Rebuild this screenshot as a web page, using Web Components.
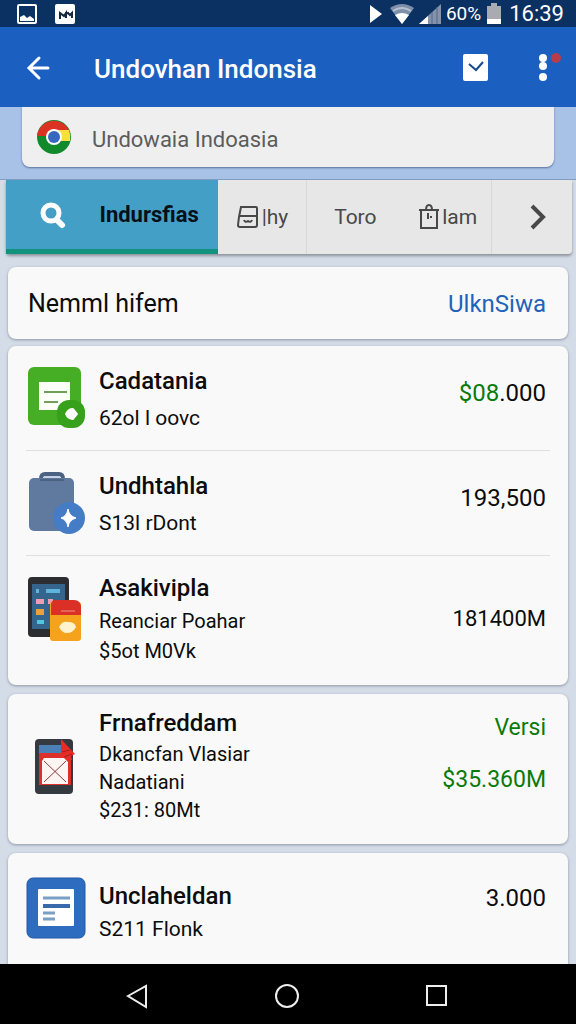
<!DOCTYPE html>
<html lang="id">
<head>
<meta charset="utf-8">
<meta name="viewport" content="width=device-width, initial-scale=1">
<title>Undovhan Indonsia</title>
<style>
    :root
    {
        --blue: #1b60c0;
        --navy: #0b3163;
        --green: #0a7a0a;
        --ink: #0c0c0c;
        --card: #f9f9f9;
    }

    body
    {
        margin: 0;
        font-family: Roboto, "Liberation Sans", sans-serif;
        color: var(--ink);
        background-color: #d3dce7;
    }
</style>
</head>
<body>

<phone-screen>
    <status-bar slot="top" battery="60%" time="16:39"></status-bar>
    <app-bar slot="top" title-text="Undovhan Indonsia"></app-bar>
    <search-bar slot="top" value="Undowaia Indoasia"></search-bar>
    <tab-strip slot="top"></tab-strip>

    <list-card>
        <section-head>
            Nemml hifem
            <a slot="action" href="#all">UlknSiwa</a>
        </section-head>
    </list-card>

    <list-card class="near">
        <list-item icon="note">
            Cadatania
            <span slot="info">62ol l oovc</span>
            <span slot="value"><span style="color: var(--green)">$08</span>.000</span>
        </list-item>
        <list-item icon="bag">
            Undhtahla
            <span slot="info">S13l rDont</span>
            <span slot="value">193,500</span>
        </list-item>
        <list-item icon="tablet" size="tall">
            Asakivipla
            <span slot="info">Reanciar Poahar</span>
            <span slot="info">$5ot M0Vk</span>
            <span slot="value">181400M</span>
        </list-item>
    </list-card>

    <list-card>
        <list-item icon="phone" size="full">
            Frnafreddam
            <span slot="info">Dkancfan Vlasiar</span>
            <span slot="info">Nadatiani</span>
            <span slot="info">$231: 80Mt</span>
            <span slot="value" style="color: var(--green)">Versi</span>
            <span slot="value" style="color: var(--green)">$35.360M</span>
        </list-item>
    </list-card>

    <list-card>
        <list-item icon="doc" size="last">
            Unclaheldan
            <span slot="info">S211 Flonk</span>
            <span slot="value">3.000</span>
        </list-item>
    </list-card>

    <nav-keys slot="bottom"></nav-keys>
</phone-screen>

<script>
// Attach an open shadow root filled with the given markup
function render(element, html) {
    element.attachShadow({ mode: 'open' }).innerHTML = html;
}


// ICONS OF THE LIST
const icons = {
    note: `
        <svg width="60" height="64" viewBox="0 0 60 64" aria-hidden="true">
            <rect x="2" y="1" width="53" height="58" rx="6" fill="#46ae25"/>
            <path d="M13 16h31v28H13z" fill="#fbfff8"/>
            <path d="M18 26h23M18 36h14" stroke="#6f9f58" stroke-width="2"/>
            <rect x="31" y="34" width="28" height="28" rx="12" fill="#38a11c"/>
            <path d="M40 48q2-5 7-5l4 5-4 5q-5 0-7-5z" fill="#fff" stroke="#fff" stroke-width="2" stroke-linejoin="round"/>
        </svg>`,
    bag: `
        <svg width="60" height="64" viewBox="0 0 60 64" aria-hidden="true">
            <path d="M15 8q0-5 4-5h14q4 0 4 5" fill="none" stroke="#4c6283" stroke-width="4"/>
            <path d="M18 6h16" stroke="#c5d0e0" stroke-width="2"/>
            <rect x="3" y="7" width="45" height="53" rx="5" fill="#60799f"/>
            <path d="M14 9h24" stroke="#4c6283" stroke-width="2"/>
            <circle cx="43" cy="47" r="16" fill="#447cc5"/>
            <path d="M42 38q1 7 8 9-7 2-8 9-1-7-7-9 6-2 7-9z" fill="#fff" stroke="#fff" stroke-width="1"/>
        </svg>`,
    tablet: `
        <svg width="60" height="66" viewBox="0 0 60 66" aria-hidden="true">
            <rect x="2" y="1" width="41" height="60" rx="4" fill="#2b2d30"/>
            <path d="M6 8h33v45H6z" fill="#35658c"/>
            <path d="M10 15h3M20 15h14" stroke="#5fb4dc" stroke-width="4"/>
            <path d="M10 23h8v5h-8zM22 23h5v5h-5z" fill="#ef9db5"/>
            <path d="M10 33h8v6h-8z" fill="#eda03a"/>
            <path d="M11 44h7v4h-7z" fill="#55c5dd"/>
            <rect x="24" y="26" width="31" height="39" rx="3" fill="#f5a31d"/>
            <path d="M25 39V29q0-5 5-5h18q7 0 7 8v7z" fill="#da3026"/>
            <path d="M35 35h14" stroke="#f3948b" stroke-width="1"/>
            <path d="M33 51q3-6 9-5 7 0 8 5-3 6-9 6-5 0-8-6z" fill="#fff3cf"/>
        </svg>`,
    phone: `
        <svg width="60" height="58" viewBox="0 0 60 58" aria-hidden="true">
            <rect x="9" y="1" width="38" height="55" rx="4" fill="#343a40"/>
            <path d="M13 7h22v9H13z" fill="#4b7fb5"/>
            <path d="M13 15h32v32H13z" fill="#dc302b"/>
            <path d="M35 1l14 15-4 2 1 4H35z" fill="#e62c24"/>
            <path d="M36 14l8-2M38 19l8-3" stroke="#a91e1b" stroke-width="1"/>
            <path d="M18 20h20l4 4v22H16V23z" fill="#fff5f3"/>
            <path d="M18 23l22 21M40 23L18 44" stroke="#8e3940" stroke-width="1"/>
        </svg>`,
    doc: `
        <svg width="60" height="62" viewBox="0 0 60 62" aria-hidden="true">
            <rect x="1" y="1" width="58" height="60" rx="6" fill="#2e6cbf" stroke="#2159a6"/>
            <rect x="12" y="12" width="36" height="37" rx="1" fill="#fff"/>
            <path d="M17 21h27M17 36h12M17 42h12" stroke="#7ba0c6" stroke-width="3"/>
            <path d="M17 29h27" stroke="#3869aa" stroke-width="4"/>
        </svg>`
};


// PAGE FRAME
class PhoneScreen extends HTMLElement {
    constructor() {
        super();
        render(this, `
        <style>
        :host
        {
            display: flex;
            flex-direction: column;
            height: 100vh;
        }

        main
        {
            flex: 1;
            min-height: 0;
            overflow-y: auto;
            scrollbar-width: none;
            display: flex;
            flex-direction: column;
            gap: 9px;
            padding: 13px 8px 0;
        }
        </style>
        <slot name="top"></slot>
        <main><slot></slot></main>
        <slot name="bottom"></slot>`);
    }
}


// STATUS BAR
class StatusBar extends HTMLElement {
    constructor() {
        super();
        render(this, `
        <style>
        :host
        {
            display: flex;
            justify-content: space-between;
            align-items: center;
            flex-shrink: 0;
            height: 27px;
            padding: 0 12px 0 16px;
            color: #fff;
            background-color: var(--navy);
        }

        div
        {
            display: flex;
            align-items: center;
        }

        .left { gap: 16px; }
        .right { gap: 5px; }
        .percent { font-size: 19px; }
        .time { font-size: 22px; margin-left: 2px; }
        svg { display: block; }
        </style>
        <div class="left">
            <svg width="22" height="22" viewBox="0 0 22 22" aria-hidden="true">
                <rect x="2" y="2" width="18" height="18" rx="1" fill="none" stroke="#fff" stroke-width="2"/>
                <path d="M4 18v-4l4-2 3 3 3-2 4 3v2z" fill="#fff"/>
            </svg>
            <svg width="22" height="22" viewBox="0 0 22 22" aria-hidden="true">
                <rect x="1" y="1" width="20" height="20" rx="2" fill="#fff"/>
                <path d="M6 16v-6l4 3 2-3v5M11 11l3-1 2 2 2-2v5" fill="none" stroke="#17273e" stroke-width="2"/>
            </svg>
        </div>
        <div class="right">
            <svg width="18" height="20" viewBox="0 0 18 20" aria-hidden="true"><path d="M3 1l12 9-12 9z" fill="#fff"/></svg>
            <svg width="24" height="22" viewBox="0 0 24 22" aria-hidden="true">
                <path d="M0 5q12-8 24 0L12 21z" fill="#7d8fa9"/>
                <path d="M3 8q9-6 18 0" fill="none" stroke="#b7c2d1" stroke-width="2"/>
                <path d="M5 12q7-4 14 0l-7 9z" fill="#fff"/>
            </svg>
            <svg width="22" height="22" viewBox="0 0 22 22" aria-hidden="true">
                <path d="M0 21L22 1v20z" fill="#8493aa"/>
                <path d="M0 21l9-8v8z" fill="#fff"/>
                <path d="M13 9v12M18 4v17" stroke="#53698a" stroke-width="1"/>
            </svg>
            <span class="percent">${this.getAttribute('battery')}</span>
            <svg width="16" height="22" viewBox="0 0 16 22" aria-hidden="true">
                <path d="M1 3h4V0h6v3h4v18H1z" fill="#a8abb2"/>
                <path d="M1 16h14v5H1z" fill="#fff"/>
            </svg>
            <span class="time">${this.getAttribute('time')}</span>
        </div>`);
    }
}


// APP BAR
class AppBar extends HTMLElement {
    constructor() {
        super();
        render(this, `
        <style>
        :host
        {
            display: flex;
            align-items: center;
            flex-shrink: 0;
            height: 80px;
            padding: 0 12px 0 24px;
            color: #fff;
            background-color: var(--blue);
        }

        h1
        {
            flex: 1;
            margin: 0 0 0 40px;
            font-size: 26px;
            line-height: 32px;
            font-weight: 500;
            padding-top: 4px;
        }

        button
        {
            display: block;
            padding: 0;
            border: 0;
            background: none;
        }

        svg { display: block; }
        .more { margin-left: 46px; }
        </style>
        <button type="button" aria-label="Back">
            <svg width="30" height="30" viewBox="0 0 30 30"><path d="M15 6L5 16l10 10M6 16h18" fill="none" stroke="#fff" stroke-width="3" stroke-linecap="round"/></svg>
        </button>
        <h1>${this.getAttribute('title-text')}</h1>
        <button type="button" aria-label="Mark">
            <svg width="30" height="30" viewBox="0 0 30 30">
                <rect x="3" y="2" width="25" height="27" rx="2" fill="#fff"/>
                <path d="M9 12l7 6 7-8" fill="none" stroke="#174a91" stroke-width="2"/>
            </svg>
        </button>
        <button class="more" type="button" aria-label="More">
            <svg width="28" height="34" viewBox="0 0 28 34">
                <g fill="#fff"><circle cx="7" cy="8" r="4"/><circle cx="7" cy="16" r="4"/><circle cx="7" cy="27" r="4"/></g>
                <circle cx="20" cy="8" r="5" fill="#b93c49"/>
            </svg>
        </button>`);
    }
}


// SEARCH
class SearchBar extends HTMLElement {
    constructor() {
        super();
        render(this, `
        <style>
        :host
        {
            display: block;
            flex-shrink: 0;
            padding: 0 22px 12px;
            background-color: #a7c1e7;
            border-bottom: 1px solid #7f9fbe;
        }

        label
        {
            display: flex;
            align-items: center;
            gap: 20px;
            height: 60px;
            padding: 0 14px;
            background-color: #efefef;
            border-radius: 0 0 8px 8px;
            box-shadow: 0 1px 2px #58719a;
        }

        input
        {
            flex: 1;
            min-width: 0;
            padding: 6px 0 0;
            border: 0;
            outline: 0;
            background: none;
            font: 22px/32px Roboto, "Liberation Sans", sans-serif;
            color: #5c5c5c;
        }
        </style>
        <label>
            <svg width="36" height="36" viewBox="0 0 36 36" aria-hidden="true">
                <circle cx="18" cy="18" r="17" fill="#128a2c"/>
                <path d="M1 17a17 17 0 0 1 32-6L18 17z" fill="#dc3223"/>
                <path d="M18 11h15q2 5 1 11h-9z" fill="#f9df38"/>
                <circle cx="18" cy="18" r="8" fill="#fff"/>
                <circle cx="18" cy="18" r="6" fill="#3868bd"/>
            </svg>
            <input type="text" aria-label="Search" value="${this.getAttribute('value')}">
        </label>`);
    }
}


// TABS
class TabStrip extends HTMLElement {
    constructor() {
        super();
        render(this, `
        <style>
        :host
        {
            display: block;
            flex-shrink: 0;
            padding: 0 4px 0 6px;
        }

        nav
        {
            display: grid;
            grid-template-columns: 48fr 20fr 22fr 20fr 18fr;
            height: 74px;
            background-color: #e7e7e7;
            border-radius: 0 0 4px 4px;
            box-shadow: 0 2px 3px #8b929b;
        }

        button
        {
            display: flex;
            align-items: center;
            justify-content: center;
            gap: 2px;
            min-width: 0;
            padding: 0;
            border: 0;
            background: none;
            color: #484848;
            font: 21px/32px Roboto, "Liberation Sans", sans-serif;
        }

        .active
        {
            gap: 32px;
            padding-left: 12px;
            color: #071018;
            background-color: #449fc7;
            border-bottom: 5px solid #13917f;
            font-size: 22px;
            font-weight: 700;
        }

        .next { padding-left: 12px; }
        .line { border-right: 1px solid #d8d8d8; }
        </style>
        <nav>
            <button class="active" type="button">
                <svg width="30" height="30" viewBox="0 0 30 30" aria-hidden="true"><circle cx="14" cy="13" r="8" fill="none" stroke="#fff" stroke-width="5"/><path d="M20 20l5 5" stroke="#fff" stroke-width="6" stroke-linecap="round"/></svg>
                Indursfias
            </button>
            <button class="line" type="button">
                <svg width="24" height="24" viewBox="0 0 24 24" aria-hidden="true"><path d="M5 2h15q1 0 1 1v17q0 2-2 2H4q-2 0-2-2l1-8zM3 11h18" fill="none" stroke="#484848" stroke-width="2"/><path d="M8 15q1 3 4 1 3 2 4-1" fill="none" stroke="#484848" stroke-width="2"/></svg>
                |hy
            </button>
            <button type="button">Toro</button>
            <button class="line" type="button">
                <svg width="22" height="26" viewBox="0 0 22 26" aria-hidden="true"><path d="M3 6h16v18H3zM1 6h20M8 6q0-5 3-5t3 5" fill="none" stroke="#484848" stroke-width="2"/><path d="M10 9v6M12 13h2" stroke="#484848" stroke-width="2"/></svg>
                lam
            </button>
            <button class="next" type="button" aria-label="Next">
                <svg width="20" height="28" viewBox="0 0 20 28"><path d="M4 3l11 11L4 25" fill="none" stroke="#484848" stroke-width="4"/></svg>
            </button>
        </nav>`);
    }
}


// CARDS
class ListCard extends HTMLElement {
    constructor() {
        super();
        render(this, `
        <style>
        :host
        {
            display: block;
            flex-shrink: 0;
            background-color: var(--card);
            border-radius: 8px;
            box-shadow: 0 1px 3px #8c96a4;
        }

        :host(.near) { margin-top: -2px; }
        </style>
        <slot></slot>`);
    }
}

class SectionHead extends HTMLElement {
    constructor() {
        super();
        render(this, `
        <style>
        :host
        {
            display: flex;
            justify-content: space-between;
            align-items: center;
            padding: 21px 22px 19px 20px;
        }

        h2
        {
            margin: 0;
            font-size: 25px;
            line-height: 32px;
            font-weight: 400;
        }

        ::slotted(a)
        {
            color: #1f62bd;
            font-size: 24px;
            line-height: 32px;
            text-decoration: none;
        }
        </style>
        <h2><slot></slot></h2>
        <slot name="action"></slot>`);
    }
}

class ListItem extends HTMLElement {
    constructor() {
        super();
        render(this, `
        <style>
        :host
        {
            --info-size: 21px;
            --info-line: 30px;
            --value-size: 24px;
            display: flex;
            gap: 13px;
            margin: 0 18px;
            padding: 19px 4px 17px 0;
        }

        :host(:not(:last-child)) { border-bottom: 1px solid #dfdfdf; }

        :host([size=tall])
        {
            --info-size: 20px;
            --value-size: 22px;
            padding: 16px 4px 19px 0;
        }

        :host([size=full])
        {
            --info-size: 20px;
            --info-line: 28px;
            --value-size: 23px;
            padding: 13px 4px 20px 0;
        }

        /* room below, so the card runs on under the system keys */
        :host([size=last]) { padding: 24px 4px 40px 0; }

        svg { display: block; }

        .icon { padding-top: 1px; }
        :host([size=tall]) .icon { padding-top: 4px; }
        :host([size=full]) .icon { padding-top: 31px; }
        :host([size=last]) .icon { padding-top: 0; }

        .copy
        {
            flex: 1;
            display: flex;
            flex-direction: column;
        }

        :host([size=last]) .copy { padding-top: 3px; }

        h3
        {
            margin: 0 0 5px;
            padding-bottom: 1px;
            font-size: 24px;
            line-height: 32px;
            font-weight: 500;
        }

        :host([size=tall]) h3, :host([size=last]) h3 { margin-bottom: 1px; }
        :host([size=full]) h3 { margin-bottom: 0; }

        ::slotted([slot=info])
        {
            font-size: var(--info-size);
            line-height: var(--info-line);
        }

        .values
        {
            display: flex;
            flex-direction: column;
            align-items: flex-end;
            gap: 20px;
            padding-top: 12px;
        }

        :host([size=tall]) .values { padding-top: 31px; }
        :host([size=full]) .values, :host([size=last]) .values { padding-top: 5px; }

        ::slotted([slot=value])
        {
            font-size: var(--value-size);
            line-height: 32px;
        }
        </style>
        <div class="icon">${icons[this.getAttribute('icon')]}</div>
        <div class="copy">
            <h3><slot></slot></h3>
            <slot name="info"></slot>
        </div>
        <div class="values"><slot name="value"></slot></div>`);
    }
}


// SYSTEM KEYS
class NavKeys extends HTMLElement {
    constructor() {
        super();
        render(this, `
        <style>
        :host
        {
            display: flex;
            justify-content: center;
            align-items: center;
            gap: 122px;
            flex-shrink: 0;
            height: 60px;
            padding-top: 4px;
            box-sizing: border-box;
            background-color: #000;
        }

        button
        {
            padding: 0;
            border: 0;
            background: none;
        }

        svg
        {
            display: block;
            fill: none;
            stroke: #eee;
            stroke-width: 2;
        }
        </style>
        <button type="button" aria-label="Back"><svg width="28" height="28" viewBox="0 0 28 28"><path d="M4 14L22 4v21z"/></svg></button>
        <button type="button" aria-label="Home"><svg width="28" height="28" viewBox="0 0 28 28"><circle cx="13" cy="14" r="11"/></svg></button>
        <button type="button" aria-label="Recent"><svg width="28" height="28" viewBox="0 0 28 28"><rect x="3" y="4" width="19" height="19"/></svg></button>`);
    }
}

customElements.define('phone-screen', PhoneScreen);
customElements.define('status-bar', StatusBar);
customElements.define('app-bar', AppBar);
customElements.define('search-bar', SearchBar);
customElements.define('tab-strip', TabStrip);
customElements.define('list-card', ListCard);
customElements.define('section-head', SectionHead);
customElements.define('list-item', ListItem);
customElements.define('nav-keys', NavKeys);
</script>
</body>
</html>
